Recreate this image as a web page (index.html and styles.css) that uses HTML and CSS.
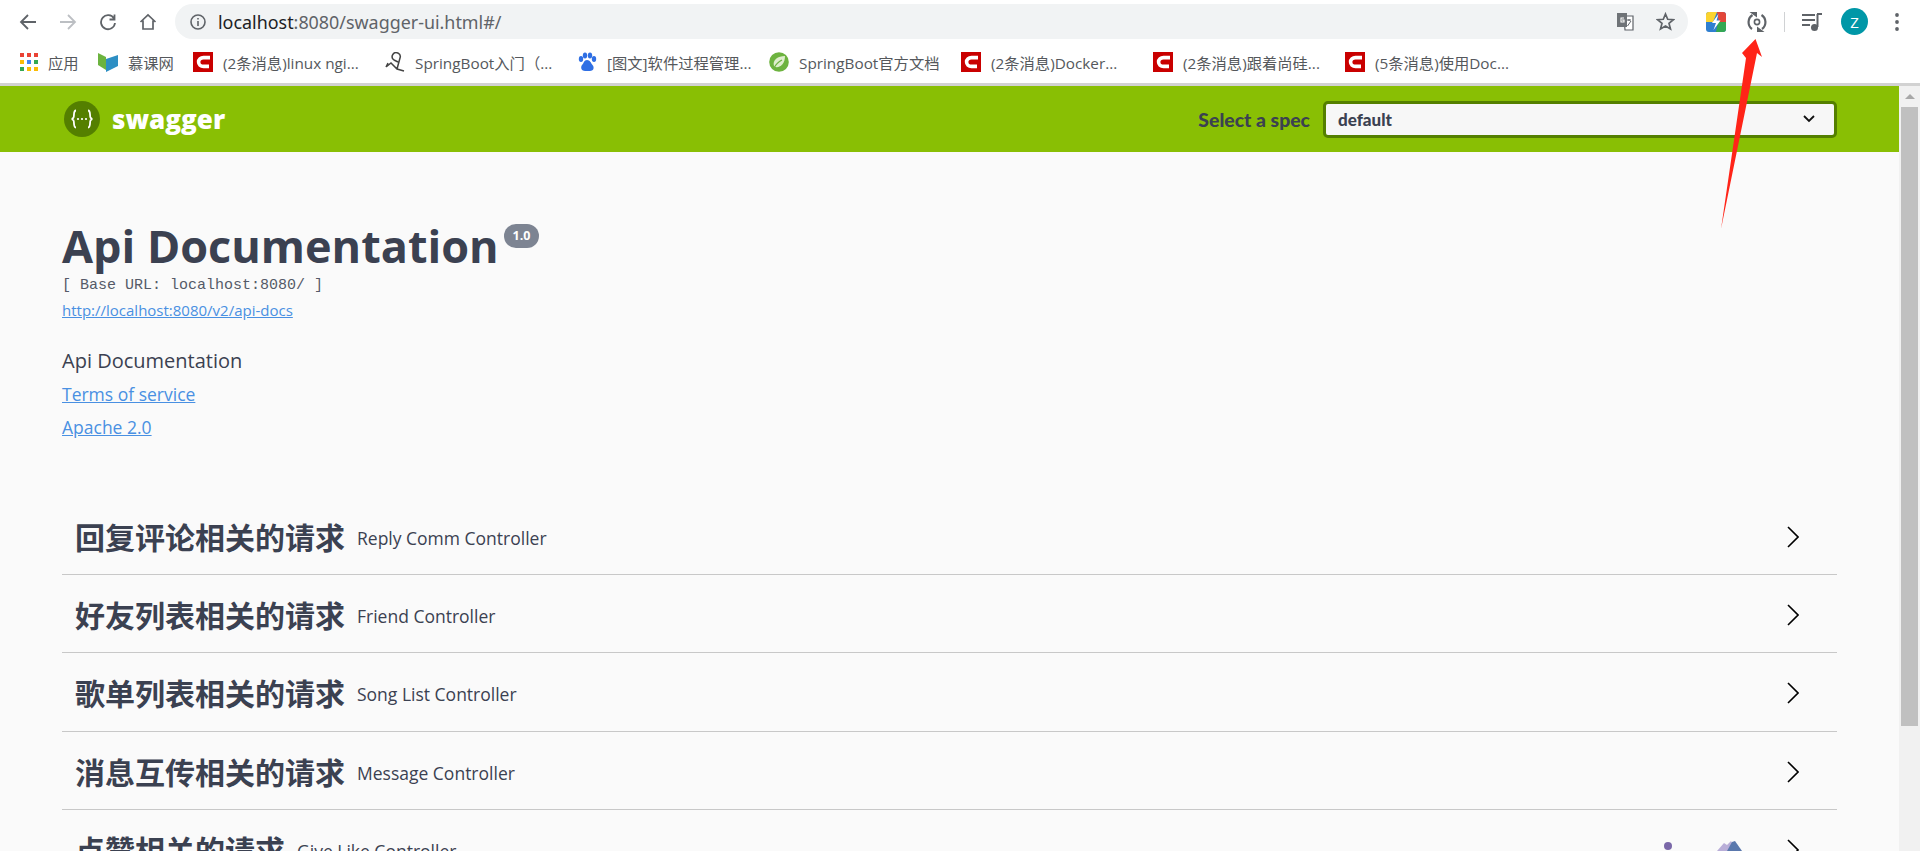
FILE: index.html
```html
<!DOCTYPE html>
<html lang="en">
<head>
<title>Swagger UI</title>
<meta charset="utf-8">
<link rel="stylesheet" href="styles.css">
</head>
<body>
<svg class="defs" width="0" height="0">
<symbol id="csdn" viewBox="0 0 20 20">
<rect width="20" height="20" fill="#c90000"/>
<path d="M17 5.6H10.5C7.6 5.6 5.6 7.6 5.6 10S7.6 14.4 10.5 14.4H16" fill="none" stroke="#fff" stroke-width="3.6"/>
</symbol>
<symbol id="chev" viewBox="0 0 12 22">
<path d="M1 1L11 11L1 21" fill="none" stroke="#000" stroke-width="1.6"/>
</symbol>
</svg>

<div class="toolbar">
<svg class="tool tool-nav" width="18" height="18" viewBox="0 0 18 18"><path d="M17 9H2M9 2L2 9L9 16" fill="none" stroke="#5f6368" stroke-width="1.8"/></svg>
<svg class="tool tool-nav" width="18" height="18" viewBox="0 0 18 18"><path d="M1 9H16M9 2L16 9L9 16" fill="none" stroke="#bcbfc3" stroke-width="1.8"/></svg>
<svg class="tool tool-nav" width="18" height="18" viewBox="0 0 18 18"><path d="M15 5.5A7 7 0 1 0 16 10M15.5 1.5V6.5H10.5" fill="none" stroke="#5f6368" stroke-width="1.8"/></svg>
<svg class="tool tool-home" width="18" height="18" viewBox="0 0 18 18"><path d="M1.5 9L9 2L16.5 9M4 7.5V16H14V7.5" fill="none" stroke="#5f6368" stroke-width="1.7"/></svg>
<div class="urlbar">
<svg width="16" height="16" viewBox="0 0 16 16"><circle cx="8" cy="8" r="7" fill="none" stroke="#5f6368" stroke-width="1.6"/><path d="M8 7V12M8 4V5.6" stroke="#5f6368" stroke-width="1.6"/></svg>
<span class="url"><span class="url-host">localhost</span>:8080/swagger-ui.html#/</span>
<svg class="url-translate" width="19" height="19" viewBox="0 0 19 19"><path d="M8 4H17V18H9Z" fill="#fff" stroke="#5f6368" stroke-width="1.2"/><rect x="1" y="1" width="10" height="14" fill="#6f7377"/><path d="M8 6H5V10H8V8H6" fill="none" stroke="#fff" stroke-width="1.1"/><path d="M11 8H15M13 7V9M11.5 14L15 9" fill="none" stroke="#5f6368"/></svg>
<svg class="url-star" width="19" height="19" viewBox="0 0 19 19"><path d="M9.5 2L11.7 7.3L17.5 7.7L13 11.4L14.5 17L9.5 14L4.5 17L6 11.4L1.5 7.7L7.3 7.3Z" fill="none" stroke="#5f6368" stroke-width="1.7"/></svg>
</div>
<svg class="ext-bolt" width="20" height="20" viewBox="0 0 20 20"><rect width="20" height="20" rx="3" fill="#2f7fd0"/><path d="M0 3A3 3 0 0 1 3 0H11L7 10H0Z" fill="#fbd32f"/><path d="M11 0H17A3 3 0 0 1 20 3V10H13Z" fill="#e2463a"/><path d="M10 20H17A3 3 0 0 0 20 17V10H12Z" fill="#34a853"/><path d="M12.5 2L6 11H10L7.5 18L14.5 8.5H10.5Z" fill="#fff"/></svg>
<svg class="ext-sync" width="20" height="20" viewBox="0 0 20 20"><path d="M5.500 3A8.500 8.500 0 0 0 5 17M14.500 3A8.500 8.500 0 0 1 15 17" fill="none" stroke="#5f6368" stroke-width="2.200"/><path d="M2.500 0H10V5.500ZM17.500 20H10V14.500Z" fill="#5f6368"/><circle cx="10" cy="10" r="2.600" fill="none" stroke="#5f6368" stroke-width="1.600"/></svg>
<div class="tool-sep"></div>
<svg class="ext-media" width="20" height="20" viewBox="0 0 20 20"><path d="M0 3H13M0 8H13M0 13H8" stroke="#5f6368" stroke-width="1.8"/><path d="M15.5 2V15" stroke="#5f6368" stroke-width="2"/><path d="M15 2H20" stroke="#5f6368" stroke-width="2"/><circle cx="12.5" cy="15.5" r="3.5" fill="#5f6368"/></svg>
<div class="avatar">Z</div>
<svg class="tool-more" width="4" height="18" viewBox="0 0 4 18"><circle cx="2" cy="2" r="1.9" fill="#5f6368"/><circle cx="2" cy="9" r="1.9" fill="#5f6368"/><circle cx="2" cy="16" r="1.9" fill="#5f6368"/></svg>
</div>

<div class="bookmarks">
<div class="bm bm-apps">
<svg width="18" height="18" viewBox="0 0 18 18">
<rect x="0" y="0" width="4" height="4" fill="#ea4335"/><rect x="7" y="0" width="4" height="4" fill="#ea4335"/><rect x="14" y="0" width="4" height="4" fill="#ea4335"/>
<rect x="0" y="7" width="4" height="4" fill="#fbbc05"/><rect x="7" y="7" width="4" height="4" fill="#4285f4"/><rect x="14" y="7" width="4" height="4" fill="#34a853"/>
<rect x="0" y="14" width="4" height="4" fill="#34a853"/><rect x="7" y="14" width="4" height="4" fill="#fbbc05"/><rect x="14" y="14" width="4" height="4" fill="#fbbc05"/>
</svg>
<span>应用</span>
</div>
<div class="bm bm-imooc">
<svg width="20" height="20" viewBox="0 0 20 20"><path d="M0 1L8 5V18L0 13Z" fill="#6cb33f"/><path d="M8 7L20 3V14L8 20Z" fill="#2d8fc4"/></svg>
<span>慕课网</span>
</div>
<div class="bm">
<svg width="20" height="20"><use href="#csdn"/></svg>
<span>(2条消息)linux ngi...</span>
</div>
<div class="bm">
<svg width="20" height="20" viewBox="0 0 20 20"><path d="M1 15L6 11L12 17L19 19M12 17L15 6A4 4 0 1 0 9 8L13 10M1 15L3 11" fill="none" stroke="#444" stroke-width="1.5"/></svg>
<span>SpringBoot入门（...</span>
</div>
<div class="bm">
<svg width="20" height="20" viewBox="0 0 20 20" fill="#2f6fe4"><ellipse cx="4" cy="7" rx="2.2" ry="3"/><ellipse cx="8" cy="3.5" rx="2.2" ry="3"/><ellipse cx="13" cy="3.5" rx="2.2" ry="3"/><ellipse cx="17" cy="7" rx="2.2" ry="3"/><path d="M10 8C7 8 7 11 5 13C3 16 5 19 8 19H13C16 19 18 16 15.500 13C14 11 13 8 10 8Z"/></svg>
<span>[图文]软件过程管理...</span>
</div>
<div class="bm">
<svg width="20" height="20" viewBox="0 0 20 20"><circle cx="10" cy="10" r="9.800" fill="#6db33f"/><path d="M5 14C3 8 9 4 16 4C16 11 12 16 6 15" fill="#dfeecd"/><path d="M5 16C7 12 9 10 13 8" stroke="#6db33f" stroke-width="1.300" fill="none"/></svg>
<span>SpringBoot官方文档</span>
</div>
<div class="bm">
<svg width="20" height="20"><use href="#csdn"/></svg>
<span>(2条消息)Docker...</span>
</div>
<div class="bm">
<svg width="20" height="20"><use href="#csdn"/></svg>
<span>(2条消息)跟着尚硅...</span>
</div>
<div class="bm">
<svg width="20" height="20"><use href="#csdn"/></svg>
<span>(5条消息)使用Doc...</span>
</div>
</div>

<div class="viewport">
<div class="page">
<div class="topbar">
<div class="brand">
<svg width="36" height="36" viewBox="0 0 36 36"><circle cx="18" cy="18" r="18" fill="#547f00"/><path d="M12 9.500C9 9.500 10.500 15.500 9.500 16.500C9 17.500 8 18 7.500 18C8 18 9 18.500 9.500 19.500C10.500 20.500 9 26.500 12 26.500M24 9.500C27 9.500 25.500 15.500 26.500 16.500C27 17.500 28 18 28.500 18C28 18 27 18.500 26.500 19.500C25.500 20.500 27 26.500 24 26.500" fill="none" stroke="#fff" stroke-width="1.800"/><circle cx="14" cy="18" r="1.100" fill="#fff"/><circle cx="18" cy="18" r="1.100" fill="#fff"/><circle cx="22" cy="18" r="1.100" fill="#fff"/></svg>
<span class="brand-name">swagger</span>
</div>
<div class="spec">
<span class="spec-label">Select a spec</span>
<div class="spec-select">
<span>default</span>
<svg width="12" height="8" viewBox="0 0 12 8"><path d="M1 1L6 6L11 1" fill="none" stroke="#111" stroke-width="1.800"/></svg>
</div>
</div>
</div>

<div class="wrapper">
<div class="info">
<div class="title-row">
<h1 class="title">Api Documentation</h1>
<span class="version">1.0</span>
</div>
<div class="base-url">[ Base URL: localhost:8080/ ]</div>
<a class="link link-docs" href="#">http://localhost:8080/v2/api-docs</a>
<p class="desc">Api Documentation</p>
<a class="link info-link" href="#">Terms of service</a>
<a class="link info-link" href="#">Apache 2.0</a>
</div>

<div class="tags">
<div class="tag">
<h3 class="tag-name">回复评论相关的请求</h3>
<small class="tag-desc">Reply Comm Controller</small>
<svg class="tag-arrow" width="12" height="22"><use href="#chev"/></svg>
</div>
<div class="tag">
<h3 class="tag-name">好友列表相关的请求</h3>
<small class="tag-desc">Friend Controller</small>
<svg class="tag-arrow" width="12" height="22"><use href="#chev"/></svg>
</div>
<div class="tag">
<h3 class="tag-name">歌单列表相关的请求</h3>
<small class="tag-desc">Song List Controller</small>
<svg class="tag-arrow" width="12" height="22"><use href="#chev"/></svg>
</div>
<div class="tag">
<h3 class="tag-name">消息互传相关的请求</h3>
<small class="tag-desc">Message Controller</small>
<svg class="tag-arrow" width="12" height="22"><use href="#chev"/></svg>
</div>
<div class="tag">
<h3 class="tag-name">点赞相关的请求</h3>
<small class="tag-desc">Give Like Controller</small>
<svg class="tag-arrow" width="12" height="22"><use href="#chev"/></svg>
</div>
</div>
</div>
</div>

<div class="scrollbar">
<div class="scroll-up"></div>
<div class="scroll-thumb"></div>
</div>
</div>

<svg class="float-bits" width="90" height="12" viewBox="0 0 90 12">
<circle cx="5" cy="7" r="4" fill="#7a68a8"/>
<path d="M54 12L61 4L64 6L68 2L74 12Z" fill="#b9aed8"/>
<path d="M64 12L69 3L72 2L79 12Z" fill="#5a78ad"/>
</svg>

<svg class="red-arrow" width="50" height="195" viewBox="1720 37 50 195">
<path d="M1755.500 39L1762 57L1757 53L1721 229L1746 58L1742 53Z" fill="#ff2418"/>
</svg>
</body>
</html>
```

FILE: styles.css
```css
html, body {
margin: 0;
height: 851px;
overflow: hidden;
}
body {
position: relative;
background-color: #fff;
font-family: "Open Sans", "Noto Sans CJK SC", sans-serif;
color: #3b4151;
}
.defs {
position: absolute;
}

/* browser chrome */
.toolbar {
display: flex;
align-items: center;
height: 43px;
padding-left: 19px;
box-sizing: border-box;
}
.tool-nav {
margin-right: 22px;
}
.tool-home {
margin-right: 18px;
}
.urlbar {
display: flex;
align-items: center;
width: 1513px;
height: 35px;
box-sizing: border-box;
padding: 0 13px 0 15px;
border-radius: 18px;
background-color: #f1f3f4;
}
.url {
margin-left: 12px;
font-family: "Noto Sans", sans-serif;
font-size: 17.900px;
color: #5f6368;
}
.url-host {
color: #202124;
}
.url-translate {
margin-left: auto;
}
.url-star {
margin-left: 21px;
}
.ext-bolt {
margin-left: 18px;
}
.ext-sync {
margin-left: 21px;
}
.tool-sep {
width: 1px;
height: 20px;
margin-left: 17px;
background-color: #d0d2d4;
}
.ext-media {
margin-left: 17px;
}
.avatar {
display: flex;
align-items: center;
justify-content: center;
width: 27px;
height: 27px;
margin-left: 19px;
border-radius: 50%;
background-color: #0097a7;
color: #fff;
font-size: 15px;
}
.tool-more {
margin-left: 27px;
}

.bookmarks {
display: flex;
align-items: center;
height: 43px;
padding: 0 0 3px 20px;
box-sizing: border-box;
border-bottom: 3px solid #d2d2d2;
}
.bm {
display: flex;
align-items: center;
gap: 10px;
width: 192px;
flex: none;
font-size: 15.300px;
color: #55585c;
white-space: nowrap;
}
.bm-apps {
width: 78px;
}
.bm-imooc {
width: 95px;
}

.viewport {
display: flex;
height: 765px;
}
.page {
flex: 1;
min-width: 0;
background-color: #fafafa;
}

/* swagger top bar */
.topbar {
display: flex;
align-items: center;
justify-content: space-between;
height: 66px;
padding: 0 62px;
background-color: #89bf04;
}
.brand {
display: flex;
align-items: center;
gap: 12px;
margin-left: 2px;
}
.brand-name {
font-size: 26px;
font-weight: 800;
color: #fff;
}
.spec {
display: flex;
align-items: center;
gap: 13px;
}
.spec-label {
font-family: Lato, sans-serif;
font-size: 19.400px;
font-weight: 900;
}
.spec-select {
display: flex;
align-items: center;
justify-content: space-between;
width: 514px;
height: 37px;
box-sizing: border-box;
padding: 0 19px 0 12px;
border: 3px solid #547f00;
border-radius: 5px;
background-color: #f7f7f7;
font-family: Lato, sans-serif;
font-size: 17px;
font-weight: 900;
}

/* api info */
.wrapper {
padding: 0 62px;
}
.info {
display: flex;
flex-direction: column;
align-items: flex-start;
padding-top: 63px;
height: 282px;
}
.title-row {
display: flex;
align-items: flex-start;
}
.title {
margin: 0;
font-size: 45px;
line-height: 62px;
font-weight: 700;
}
.version {
margin: 9px 0 0 5px;
padding: 0 9px;
height: 24px;
line-height: 23px;
border-radius: 12px;
background-color: #7d8492;
color: #fff;
font-size: 12.500px;
font-weight: 700;
}
.base-url {
margin-top: -1px;
font-family: "Liberation Mono", monospace;
font-size: 15px;
line-height: 20px;
color: #555a68;
}
.link {
color: #4990e2;
font-size: 17.500px;
line-height: 24px;
}
.link-docs {
font-size: 15px;
line-height: 20px;
margin-top: 4px;
}
.desc {
margin: 29px 0 0;
font-size: 20px;
line-height: 24px;
}
.info-link {
margin-top: 9px;
}

/* tags */
.tag {
display: flex;
align-items: center;
height: 78.200px;
box-sizing: border-box;
padding: 5px 38px 0 13px;
border-bottom: 1.500px solid #c8c8c8;
}
.tag:last-child {
border-bottom: none;
}
.tag-name {
margin: 0;
font-size: 30px;
line-height: 40px;
font-weight: 700;
}
.tag-desc {
margin-left: 12px;
font-size: 17.500px;
}
.tag-arrow {
margin-left: auto;
margin-bottom: 2px;
}

/* scrollbar */
.scrollbar {
width: 21px;
padding: 0 2px 0 2px;
box-sizing: border-box;
background-color: #f1f1f1;
}
.scroll-up {
width: 0;
height: 0;
margin: 8px auto 0;
border: 5px solid transparent;
border-top: none;
border-bottom: 5px solid #a8a8a8;
}
.scroll-thumb {
height: 619px;
margin-top: 8px;
background-color: #c0c0c0;
}

/* overlays */
.float-bits {
position: absolute;
left: 1663px;
top: 839px;
}
.red-arrow {
position: absolute;
left: 1720px;
top: 37px;
}
```
